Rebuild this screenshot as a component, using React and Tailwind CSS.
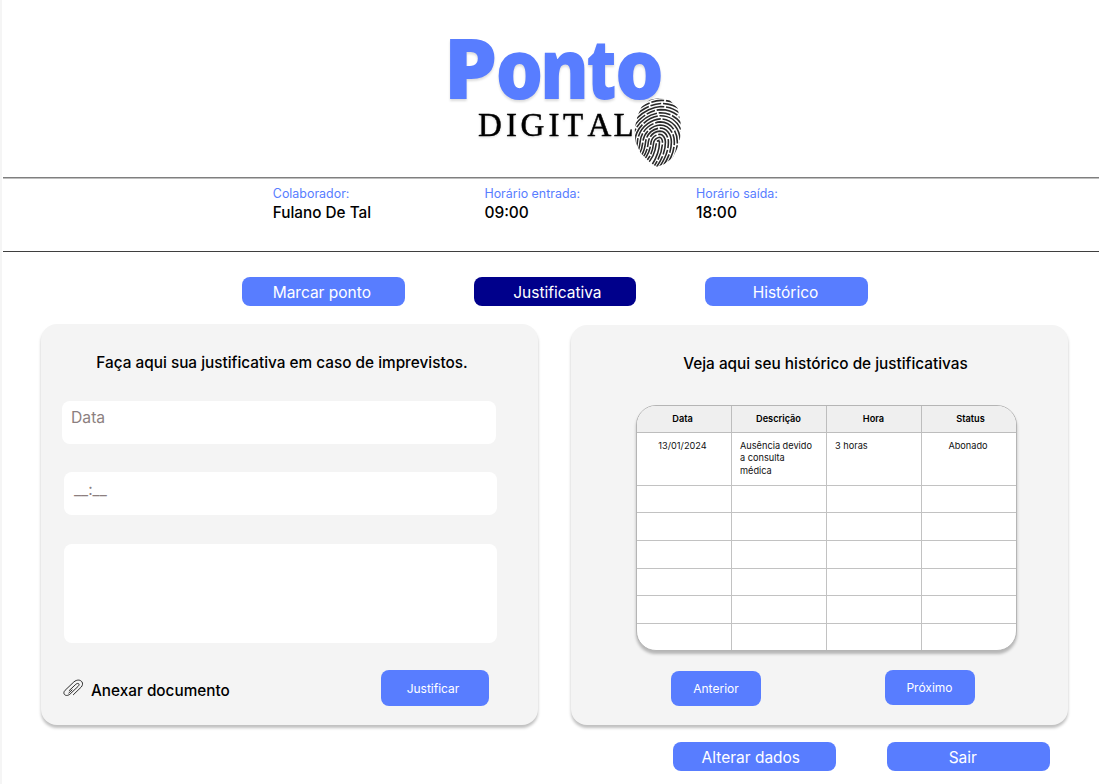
import React from "react";

const ridges = [0, 1, 2, 3, 4, 5, 6, 7, 8, 9, 10, 11, 12, 13, 14];

function ridgePath(i) {
  const r = 1.5 + i * 2.85;
  const cx = 23.5 + i * 0.12;
  const cy = 44;
  const top = cy - r * 1.08;
  return `M${cx - r - 14} ${cy + 27 - i * 0.9} C${cx - r - 3} ${cy + 17 - i * 0.5} ${cx - r - 1} ${cy + 9} ${cx - r} ${cy} C${cx - r + 1} ${top + r * 0.4} ${cx - r * 0.35} ${top + 0.5} ${cx + 1.5} ${top} C${cx + r * 0.6} ${top} ${cx + r} ${top + r * 0.45} ${cx + r} ${cy} C${cx + r} ${cy + 11} ${cx + r - 5} ${cy + 21} ${cx + r - 15} ${cy + 33}`;
}

const dashes = ["30 1.8", "16 1.8 27 1.8", "25 1.8 12 1.8", "22 1.8 9 1.8", "31 1.8 15 1.8", "27 1.8 11 1.8", "13 1.8 21 1.8"];

function Logo() {
  return (
    <svg className="block h-[145px] w-[250px] overflow-visible" viewBox="440 30 250 145" role="img" aria-label="Ponto Digital">
      <defs>
        <clipPath id="finger">
          <path d="M15 2 24 0 35 2 43 10 46 24 46.5 35 44 48 38 60 30 66 22 69 15 64 6 55 1 44 0 31 3 18 7 9Z" />
        </clipPath>
      </defs>
      <text className="fill-[#587dff] font-['Open_Sans',sans-serif] text-[84px] font-extrabold drop-shadow-[0_2px_1px_rgba(0,0,0,0.14)]" y="98.5">
        <tspan x="443.5" textLength="54" lengthAdjust="spacingAndGlyphs">P</tspan>
        <tspan x="495.5" textLength="48" lengthAdjust="spacingAndGlyphs">o</tspan>
        <tspan x="540" textLength="49" lengthAdjust="spacingAndGlyphs">n</tspan>
        <tspan x="586.5" textLength="30" lengthAdjust="spacingAndGlyphs">t</tspan>
        <tspan x="615" textLength="49" lengthAdjust="spacingAndGlyphs">o</tspan>
      </text>
      <text className="fill-black stroke-black font-['Liberation_Serif',serif] text-[33px] drop-shadow-[0_1px_1px_rgba(0,0,0,0.15)]" strokeWidth="0.45" y="136" x="478 506 520.5 548.5 563 587.5 613.5">DIGITAL</text>
      <g transform="translate(634.5 98)">
        <g clipPath="url(#finger)" fill="none" stroke="#2a2a2a" strokeWidth="1.6">
          {ridges.map((i) => (
            <path key={i} d={ridgePath(i)} strokeDasharray={dashes[i % 7]} />
          ))}
        </g>
      </g>
    </svg>
  );
}

function Info({ label, value, valueClass = "" }) {
  return (
    <div className="w-[211.6px]">
      <div className="text-[12.45px] leading-4 text-[#587dff]">{label}</div>
      <div className={`leading-5 font-medium text-black ${valueClass}`}>{value}</div>
    </div>
  );
}

function WideButton({ children, dark, className = "" }) {
  return (
    <button className={`h-[29px] w-[162.6px] rounded-[8px] pt-[3px] text-[15.5px] leading-5 text-white ${dark ? "bg-[#00008b]" : "bg-[#587dff]"} ${className}`}>
      {children}
    </button>
  );
}

function SmallButton({ children, className }) {
  return (
    <button className={`h-[35.5px] rounded-[8px] bg-[#587dff] text-[12px] leading-4 text-white ${className}`}>
      {children}
    </button>
  );
}

function PaperClip() {
  return (
    <svg className="h-[18px] w-[21px]" viewBox="0 0 21 18" fill="none" stroke="#222" strokeWidth="0.95" strokeLinecap="round">
      <path d="M6.2 11.6 12.8 5.3C15.3 3.2 17.3 5.2 15.1 7.4L7.1 15C2.8 18.7-1.2 14.6 2.1 11.3L10.8 3C16.2-1.7 22.2 3.2 18.3 8L10.4 15.7" />
      <path d="M9.1 10.9 5.8 14" />
    </svg>
  );
}

const rows = [
  ["13/01/2024", "Ausência devido a consulta médica", "3 horas", "Abonado"],
  ["", "", "", ""],
  ["", "", "", ""],
  ["", "", "", ""],
  ["", "", "", ""],
  ["", "", "", ""],
  ["", "", "", ""],
];

const cellAlign = ["text-center pr-[3px]", "pl-[8px] pr-2", "pl-[8px]", "text-center pr-0.5"];
const headAlign = ["pr-[3px]", "pr-px", "pr-px", "pl-[3px]"];

function HistoryTable() {
  return (
    <div className="grid h-[246px] w-[381px] grid-cols-[95px_95px_95px_94px] grid-rows-[27px_53px_27px_28px_28px_27px_28px_26px] overflow-hidden rounded-[20px] border border-[#b5b5b5] bg-white text-[9.2px] leading-[12.3px] text-[#111] shadow-[0_3px_3px_rgba(0,0,0,0.25)]">
      {["Data", "Descrição", "Hora", "Status"].map((h, i) => (
        <div key={h} className={`border-b border-[#bdbdbd] bg-[#efefef] pt-[7px] text-center font-semibold text-black ${headAlign[i]} ${i < 3 ? "border-r" : ""}`}>
          {h}
        </div>
      ))}
      {rows.map((row, r) =>
        row.map((cell, c) => (
          <div key={`${r}-${c}`} className={`border-[#c2c2c2] pt-[7px] ${cellAlign[c]} ${c < 3 ? "border-r" : ""} ${r < 6 ? "border-b" : ""}`}>
            {cell}
          </div>
        ))
      )}
    </div>
  );
}

export default function App() {
  return (
    <div className="h-[784px] w-[1099px] overflow-hidden border-l-2 border-[#f5f5f5] bg-white font-['Inter',sans-serif] text-black">
      <header className="h-[177px] pt-[30px] pl-[438px]">
        <Logo />
      </header>
      <section className="ml-px h-[75px] border-b border-[#3f3f3f]">
        <div className="h-[2px] border-t border-[#7f7f7f] bg-[#bfbfbf]" />
        <div className="flex pt-[7px] pl-[269.8px]">
          <Info label="Colaborador:" value="Fulano De Tal" valueClass="mt-px text-[15.3px]" />
          <Info label="Horário entrada:" value="09:00" valueClass="mt-px text-[15.5px]" />
          <Info label="Horário saída:" value="18:00" valueClass="mt-px text-[15.5px]" />
        </div>
      </section>
      <nav className="flex gap-[69px] pt-[25.3px] pl-[240px]">
        <WideButton className="pr-[3px]">Marcar ponto</WideButton>
        <WideButton dark className="pl-[5px]">Justificativa</WideButton>
        <WideButton className="pr-[2px]">Histórico</WideButton>
      </nav>
      <main className="flex gap-[33px] pt-[17.7px] pl-[39px]">
        <section className="h-[401px] w-[497px] rounded-[16px] bg-[#f4f4f4] shadow-[0_3px_3px_rgba(0,0,0,0.25)]">
          <h2 className="pt-[29px] pr-[15px] text-center text-[15.33px] leading-5 font-medium">Faça aqui sua justificativa em caso de imprevistos.</h2>
          <div className="mt-[28px] ml-[21px] h-[43px] w-[434px] rounded-[8px] bg-white pt-[7px] pl-[9px] text-[15.7px] leading-5 text-[#8c7f7f]">Data</div>
          <div className="mt-[28px] ml-[23px] h-[43px] w-[433px] rounded-[8px] bg-white pt-[8px] pl-[10px] text-[15.5px] leading-5 text-[#8c7f7f]">__:__</div>
          <div className="mt-[29px] ml-[23px] h-[99px] w-[433px] rounded-[8px] bg-white" />
          <div className="mt-[27.3px] flex justify-between pr-[49px] pl-[22px]">
            <div className="flex items-center gap-[7px] pt-[6px] text-[15.3px] leading-5 font-medium">
              <span className="pb-[6px]"><PaperClip /></span>
              Anexar documento
            </div>
            <SmallButton className="w-[108px] pt-px pr-1">Justificar</SmallButton>
          </div>
        </section>
        <section className="mt-px h-[400px] w-[497px] rounded-[16px] bg-[#f4f4f4] shadow-[0_3px_3px_rgba(0,0,0,0.25)]">
          <h2 className="pt-[29px] pl-[12px] text-center text-[15.33px] leading-5 font-medium">Veja aqui seu histórico de justificativas</h2>
          <div className="mt-[31px] ml-[65px]">
            <HistoryTable />
          </div>
          <div className="mt-[19px] flex gap-[124px] pl-[100px]">
            <SmallButton className="mt-px w-[90px]">Anterior</SmallButton>
            <SmallButton className="w-[90px] pt-px pr-px">Próximo</SmallButton>
          </div>
        </section>
      </main>
      <footer className="flex gap-[51.4px] pt-[17.2px] pl-[671px]">
        <WideButton className="pr-[7px]">Alterar dados</WideButton>
        <WideButton className="pr-[11px]">Sair</WideButton>
      </footer>
    </div>
  );
}
